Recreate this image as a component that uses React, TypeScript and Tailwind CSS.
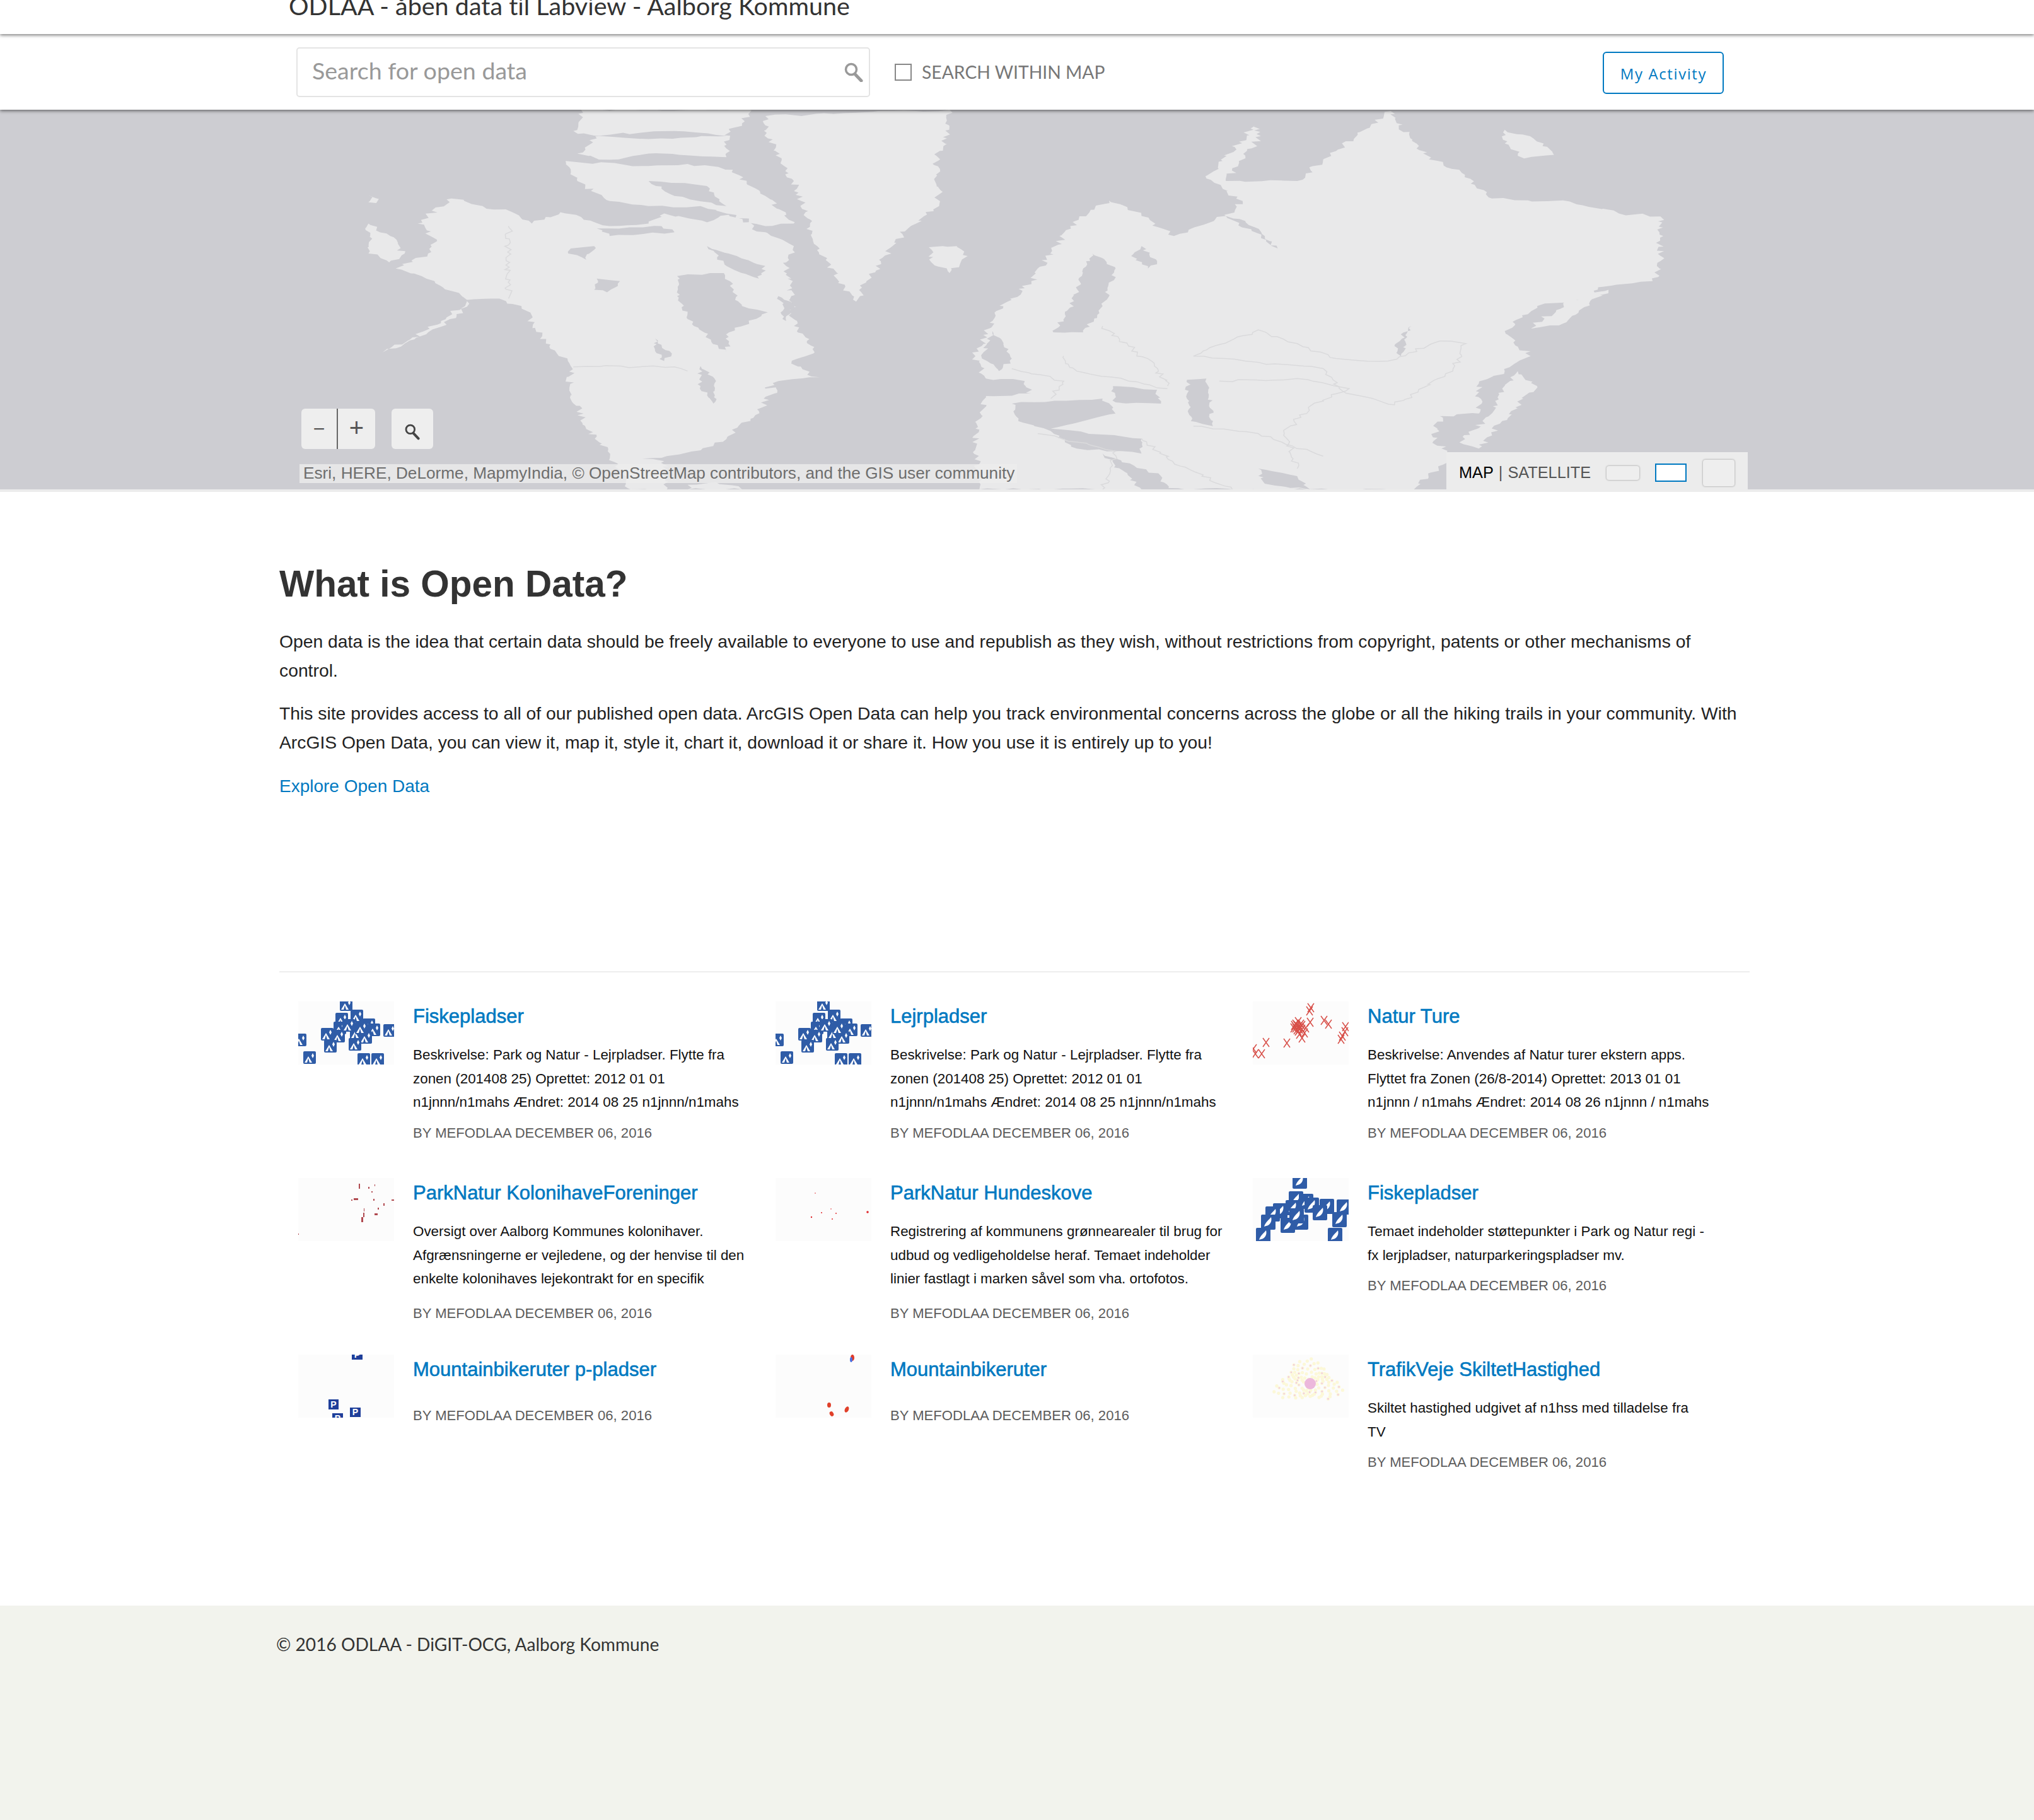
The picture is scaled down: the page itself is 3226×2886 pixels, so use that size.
import { Fragment } from 'react';

type Pt = [number, number];

const LAND = [
  // alaska + canada + us + mexico
  'M348,370 L372,400 L395,425 L410,470 L432,425 L450,455 L470,480 L500,470 L512,430 L545,465 L562,435 L590,505 L612,560 L606,640 L610,760 L612,880 L622,940 L628,985 L610,1030 L632,1085 L600,1100 L590,1130 L598,1125 L585,1220 L560,1332 L533,1382 L510,1407 L495,1410 L512,1420 L514,1533 L486,1533 L483,1492 L464,1350 L452,1292 L439,1125 L440,1040 L418,920 L402,800 L385,770 L360,775 L335,700 L305,650 L330,590 L337,540 L322,470 Z',
  // chukotka wrap
  'M284,470 L298,510 L312,590 L300,625 L284,590 Z',
  'M284,358 L292,372 L290,388 L284,385 Z',
  // aleutians
  'M360,780 L352,840 L330,905 L312,950 L295,985 L318,925 L340,860 Z',
  // arctic islands
  'M448,15 L578,15 L572,70 L562,95 L560,205 L500,190 L470,215 L445,190 L460,130 L442,100 Z',
  'M436,220 L500,240 L530,232 L565,255 L590,360 L612,470 L590,480 L560,430 L540,400 L500,400 L470,380 L445,300 Z',
  // greenland
  'M590,40 L732,15 L730,130 L722,200 L724,400 L700,490 L688,560 L668,700 L660,782 L645,690 L630,560 L612,300 L592,130 Z',
  // iceland
  'M716,565 L738,560 L746,600 L732,668 L718,625 Z',
  // eurasia
  'M855,378 L880,440 L905,520 L945,440 L958,380 L930,290 L968,70 L972,120 L945,300 L1000,300 L1030,180 L1072,20 L1092,170 L1115,245 L1125,255 L1150,370 L1210,382 L1248,430 L1280,442 L1280,620 L1274,700 L1232,725 L1225,775 L1185,800 L1160,900 L1180,1000 L1160,1060 L1140,1110 L1140,1230 L1110,1240 L1105,1340 L1120,1400 L1090,1533 L755,1533 L752,1290 L760,1160 L795,1150 L790,1100 L760,1090 L752,1000 L768,820 L795,700 L825,480 Z',
  // kuril / kamchatka arc
  'M1240,735 L1225,790 L1205,870 L1180,890 L1205,790 Z',
  // japan
  'M1170,1060 L1185,1120 L1165,1220 L1140,1370 L1125,1345 L1150,1230 L1158,1130 Z',
  // svalbard side
  'M1160,95 L1190,150 L1198,195 L1175,210 L1160,150 Z',
  // cuba
  'M530,1515 L552,1505 L572,1533 L530,1533 Z',
];

const WATER = [
  // arctic channels
  'M445,120 L520,100 L560,120 L500,132 Z',
  'M460,490 L510,480 L520,505 L470,520 Z',
  'M500,300 L545,320 L560,400 L520,360 Z',
  // hudson bay + channels
  'M522,680 L558,668 L572,800 L592,825 L562,905 L560,985 L535,880 L522,760 Z',
  'M545,560 L590,640 L585,690 L560,640 Z',
  'M600,760 L612,800 L606,860 Z',
  // gulf of st lawrence + us lakes
  'M540,1040 L552,1100 L550,1190 L540,1120 Z',
  // baltic + white sea
  'M842,590 L860,650 L850,800 L835,905 L812,905 L828,780 L835,650 Z',
  'M880,560 L892,620 L885,650 L872,600 Z',
  'M945,440 L965,500 L985,570 L975,520 L960,460 Z',
  // channel
  'M765,900 L780,1010 L770,1060 L757,1010 Z',
  // mediterranean
  'M780,1190 L850,1170 L860,1230 L810,1290 L880,1330 L880,1390 L830,1370 L810,1300 L785,1260 Z',
  // black sea + caspian
  'M858,1120 L892,1135 L895,1190 L860,1185 Z',
  'M915,1095 L930,1090 L935,1280 L918,1260 Z',
  // red sea + gulf
  'M850,1390 L895,1480 L900,1533 L880,1533 Z',
  'M970,1450 L1000,1480 L1010,1533 L975,1510 Z',
  // great lakes
  'M505,930 L518,990 L512,1020 L505,980 Z',
  'M460,690 L478,700 L468,745 L458,735 Z',
  'M440,570 L458,560 L452,615 L438,590 Z',
  'M1080,1000 L1088,880 L1075,960 Z',
];

const BORDERS = [
  'M392,480 L392,770',
  'M442,1043 L520,1043 L530,1060',
  'M850,880 L870,960 L890,1040 L900,1120',
  'M820,1000 L830,1060 L870,1100 L900,1130',
  'M920,1000 L970,895 L1000,950 L1030,1010 L1070,1020 L1110,940 L1130,950 L1120,1060 L1075,1195 L1035,1140 L1020,1050 L960,1020 L920,1000',
  'M940,1100 L1000,1090 L1040,1130 L1010,1200 L990,1310 L1000,1450',
  'M880,1330 L910,1440 L950,1533',
  'M800,1310 L860,1380 L850,1533',
  'M920,1280 L970,1310 L1020,1400',
  'M780,1050 L820,1100 L810,1170',
];

// break the straight edges up so the outlines read as coastline
function rough(d: string, amp: number, closed: boolean) {
  const pts = d.match(/-?\d+(\.\d+)?,-?\d+(\.\d+)?/g)!.map((p) => p.split(',').map(Number));
  let seed = pts.length * 7 + Math.round(pts[0][0]);
  const rnd = () => {
    seed = (seed * 9301 + 49297) % 233280;
    return seed / 233280 - 0.5;
  };
  const out: string[] = [];
  const n = closed ? pts.length : pts.length - 1;
  for (let i = 0; i < n; i++) {
    const [x1, y1] = pts[i];
    const [x2, y2] = pts[(i + 1) % pts.length];
    const steps = Math.max(1, Math.round(Math.hypot(x2 - x1, y2 - y1) / 9));
    for (let s = 0; s < steps; s++) {
      const t = s / steps;
      const j = s === 0 ? 0 : amp;
      out.push(`${x1 + (x2 - x1) * t + rnd() * j},${y1 + (y2 - y1) * t + rnd() * j * 1.6}`);
    }
  }
  if (!closed) out.push(pts[n].join(','));
  return `M${out.join(' L')}${closed ? ' Z' : ''}`;
}

const MAP_TILE = '#2f5ca7';

const tentTiles: Pt[] = [[76, 5], [93, 23], [69, 28], [112, 37], [120, 45], [66, 42], [46, 52], [92, 50], [107, 57], [64, 55], [51, 71], [90, 68], [145, 46], [3, 61], [18, 89], [104, 92], [126, 92], [80, 38], [100, 42]];
const fishTiles: Pt[] = [[75, 5], [69, 33], [85, 37], [64, 47], [44, 52], [32, 57], [118, 45], [94, 43], [107, 55], [145, 46], [138, 66], [25, 70], [56, 75], [77, 70], [17, 91], [131, 91], [70, 60]];
const crosses: Pt[] = [[90, 15], [92, 10], [113, 30], [120, 36], [91, 33], [72, 32], [66, 38], [72, 40], [78, 44], [70, 45], [76, 36], [82, 50], [74, 52], [84, 42], [65, 42], [68, 36], [74, 44], [70, 38], [75, 41], [72, 47], [78, 38], [68, 42], [146, 48], [147, 40], [140, 60], [142, 55], [54, 66], [21, 65], [14, 83], [4, 83], [1, 75], [78, 58]];

function Tents() {
  return (
    <>
      {tentTiles.map(([x, y], i) => (
        <g key={i} transform={`translate(${x - 10} ${y - 10})`}>
          <rect width="20" height="20" rx="2" fill={MAP_TILE} />
          <path d="M2,18 L8,8 L14,18 Z M8,11 L6,18 L10,18 Z" fill="#fff" fillRule="evenodd" />
          <path d="M15,3 L17,7 L15,11 L13,7 Z" fill="#fff" />
        </g>
      ))}
    </>
  );
}

function Fish() {
  return (
    <>
      {fishTiles.map(([x, y], i) => (
        <g key={i} transform={`translate(${x - 12} ${y - 12})`}>
          <rect width="23" height="24" rx="2" fill={MAP_TILE} />
          <path d="M5,19 C7,12 12,9 16,4 C18,11 14,17 8,18 Z" fill="#fff" />
        </g>
      ))}
    </>
  );
}

function Crosses() {
  return (
    <g stroke="#d2322a" strokeWidth="1.5" opacity="0.85">
      {crosses.map(([x, y], i) => (
        <path key={i} d={`M${x - 5},${y - 7} L${x + 5},${y + 7} M${x + 5},${y - 7} L${x - 5},${y + 7}`} />
      ))}
    </g>
  );
}

function Colonies() {
  const marks: [number, number, number, number][] = [
    [96, 9, 2, 8], [111, 14, 2, 3], [121, 10, 1, 3], [116, 21, 2, 2], [88, 32, 7, 3], [84, 34, 2, 2], [119, 33, 2, 3],
    [148, 34, 5, 2], [135, 40, 2, 4], [104, 48, 1, 5], [126, 47, 2, 3], [121, 56, 5, 3], [103, 55, 2, 7], [100, 62, 3, 8], [0, 88, 1, 2],
  ];
  return (
    <g fill="#b04a50">
      {marks.map(([x, y, w, h], i) => (
        <rect key={i} x={x} y={y} width={w} height={h} />
      ))}
    </g>
  );
}

function Dogs() {
  const dots: [number, number, number][] = [[63, 24, 0.8], [88, 49, 0.8], [73, 55, 1], [96, 56, 1], [57, 62, 1.2], [90, 65, 1], [146, 54, 1.8]];
  return (
    <g fill="#e0282c">
      {dots.map(([x, y, r], i) => (
        <circle key={i} cx={x} cy={y} r={r} />
      ))}
    </g>
  );
}

function Parking() {
  const tiles: [number, number, number, number][] = [[48, 71, 16, 16], [82, 84, 17, 15], [54, 93, 17, 16], [85, -8, 17, 16]];
  return (
    <g>
      {tiles.map(([x, y, w, h], i) => (
        <g key={i}>
          <rect x={x} y={y} width={w} height={h} fill="#1f3f9a" />
          <text x={x + w / 2} y={y + h - 3} textAnchor="middle" fontSize="14" fontWeight="700" fill="#fff" fontFamily="'Liberation Sans', sans-serif">P</text>
        </g>
      ))}
    </g>
  );
}

function BikeRoutes() {
  return (
    <g>
      <ellipse cx="122" cy="5" rx="3" ry="5" fill="#e03a2a" />
      <ellipse cx="120" cy="8" rx="2" ry="4" fill="#4a6fe0" />
      <ellipse cx="85" cy="80" rx="3" ry="4" fill="#e0402a" />
      <ellipse cx="89" cy="94" rx="3" ry="4" fill="#e0402a" transform="rotate(-30 89 94)" />
      <ellipse cx="113" cy="87" rx="3" ry="5" fill="#e0402a" transform="rotate(25 113 87)" />
    </g>
  );
}

function SignedRoads() {
  const dots: Pt[] = [];
  for (let i = 1; i < 120; i++) {
    const a = i * 2.399;
    const r = Math.sqrt(i / 120);
    const wob = 1 + 0.25 * Math.sin(a * 3);
    dots.push([88 + Math.cos(a) * r * 48 * wob, 44 + Math.sin(a) * r * 31 * wob]);
  }
  return (
    <g>
      <g fill="#fcf8d8">
        {dots.map(([x, y], i) => (
          <circle key={i} cx={x} cy={y} r="2.6" />
        ))}
      </g>
      <g fill="#f0c4e0">
        {dots.filter((_, i) => i % 4 === 0).map(([x, y], i) => (
          <circle key={i} cx={x} cy={y} r="1.2" />
        ))}
      </g>
      <ellipse cx="91" cy="46" rx="9" ry="9" fill="#ecb8dc" />
    </g>
  );
}

function SearchGlass({ className }: { className: string }) {
  return (
    <svg className={className} viewBox="0 0 30 31" fill="none" stroke="currentColor">
      <circle cx="11" cy="11" r="8.5" strokeWidth="3.5" />
      <path d="M17,18.5 L27,29" strokeWidth="5" strokeLinecap="round" />
    </svg>
  );
}

const posts = [
  { title: 'Fiskepladser', desc: 'Beskrivelse: Park og Natur - Lejrpladser. Flytte fra zonen (201408 25) Oprettet: 2012 01 01 n1jnnn/n1mahs Ændret: 2014 08 25 n1jnnn/n1mahs', thumb: <Tents /> },
  { title: 'Lejrpladser', desc: 'Beskrivelse: Park og Natur - Lejrpladser. Flytte fra zonen (201408 25) Oprettet: 2012 01 01 n1jnnn/n1mahs Ændret: 2014 08 25 n1jnnn/n1mahs', thumb: <Tents /> },
  { title: 'Natur Ture', desc: 'Beskrivelse: Anvendes af Natur turer ekstern apps. Flyttet fra Zonen (26/8-2014) Oprettet: 2013 01 01 n1jnnn / n1mahs Ændret: 2014 08 26 n1jnnn / n1mahs', thumb: <Crosses /> },
  { title: 'ParkNatur KolonihaveForeninger', desc: 'Oversigt over Aalborg Kommunes kolonihaver. Afgrænsningerne er vejledene, og der henvise til den enkelte kolonihaves lejekontrakt for en specifik', cut: true, thumb: <Colonies /> },
  { title: 'ParkNatur Hundeskove', desc: 'Registrering af kommunens grønnearealer til brug for udbud og vedligeholdelse heraf. Temaet indeholder linier fastlagt i marken såvel som vha. ortofotos.', cut: true, thumb: <Dogs /> },
  { title: 'Fiskepladser', desc: 'Temaet indeholder støttepunkter i Park og Natur regi - fx lerjpladser, naturparkeringspladser mv.', thumb: <Fish /> },
  { title: 'Mountainbikeruter p-pladser', desc: '', thumb: <Parking /> },
  { title: 'Mountainbikeruter', desc: '', thumb: <BikeRoutes /> },
  { title: 'TrafikVeje SkiltetHastighed', desc: 'Skiltet hastighed udgivet af n1hss med tilladelse fra TV', narrow: true, thumb: <SignedRoads /> },
];

function WorldMap() {
  return (
    <svg className="absolute inset-0 h-full w-full" viewBox="0 15 1568 1518" preserveAspectRatio="none">
      {LAND.map((d, i) => (
        <path key={i} d={rough(d, 7, true)} fill="#e9e9ea" />
      ))}
      {WATER.map((d, i) => (
        <path key={i} d={rough(d, 5, true)} fill="#cdcdd2" />
      ))}
      {BORDERS.map((d, i) => (
        <path key={i} d={rough(d, 6, false)} fill="none" stroke="#dadadc" strokeWidth="1.5" vectorEffect="non-scaling-stroke" />
      ))}
    </svg>
  );
}

export default function App() {
  return (
    <div className="flex min-h-[2886px] w-[3226px] flex-col bg-white font-['Liberation_Sans',Arial,sans-serif]">
      {/* Site title, cut off by the top of the page */}
      <header className="relative z-20 h-[54px] overflow-hidden bg-white shadow-[0_2px_5px_rgba(0,0,0,0.5)]">
        <h1 className="-mt-[17px] ml-[458px] font-['Lato',sans-serif] text-[39.5px] leading-[52px] text-[#333] [font-variant-ligatures:none]">
          ODLAA - åben data til Labview - Aalborg Kommune
        </h1>
      </header>

      {/* Search bar */}
      <div className="relative z-10 flex h-[120px] items-center bg-white pl-[470px] shadow-[0_2px_5px_rgba(0,0,0,0.5)]">
        <div className="flex h-[79px] w-[910px] items-center justify-between rounded-[5px] border-2 border-[#e4e4e4] pl-[23px] pr-[9px]">
          <span className="-mt-[3px] font-['Lato',sans-serif] text-[37.6px] text-[#999]">Search for open data</span>
          <SearchGlass className="h-[31px] w-[30px] text-[#999]" />
        </div>
        <span className="ml-[39px] h-[27px] w-[27px] border-2 border-[#888]" />
        <span className="ml-[16px] font-['Lato',sans-serif] text-[28.3px] text-[#777]">SEARCH WITHIN MAP</span>
        <button className="ml-[790px] mt-[3px] h-[67px] w-[192px] rounded-[6px] border-2 border-[#0079c1] pt-[2px] font-['Open_Sans',sans-serif] text-[24px] tracking-[1.6px] text-[#0079c1]">
          My Activity
        </button>
      </div>

      {/* Map */}
      <section className="relative h-[602px] overflow-hidden bg-[#cdcdd2]">
        <WorldMap />
        <div className="absolute left-[478px] top-[474px] flex h-[64px] w-[117px] rounded-[6px] bg-[#eeeeee] text-[#555]">
          <span className="flex w-[58px] items-center justify-center border-r-2 border-[#666] text-[32px] leading-none">−</span>
          <span className="flex flex-1 items-center justify-center pb-[4px] text-[40px] leading-none">+</span>
        </div>
        <div className="absolute left-[621px] top-[474px] flex h-[64px] w-[66px] items-center justify-center rounded-[6px] bg-[#eeeeee]">
          <SearchGlass className="mt-[8px] h-[27px] w-[24px] text-[#444]" />
        </div>
        <div className="absolute left-[475px] top-[562px] flex h-[30px] w-[1138px] items-center whitespace-nowrap bg-[#ececec]/80 pl-[6px] text-[26.2px] text-[#6e6e6e]">
          Esri, HERE, DeLorme, MapmyIndia, © OpenStreetMap contributors, and the GIS user community
        </div>
        <div className="absolute bottom-0 left-[2294px] flex h-[59px] w-[478px] items-center bg-[#ececec] pl-[20px] pt-[6px] text-[25.3px] text-[#555]">
          <span className="text-black">MAP</span>
          <span className="mx-[8px]">|</span>
          <span>SATELLITE</span>
          <span className="ml-[25px] h-[22px] w-[52px] rounded-[4px] bg-[#eeeeee] shadow-[0_0_3px_rgba(0,0,0,0.4)]" />
          <span className="ml-[25px] h-[29px] w-[50px] border-2 border-[#0079c1] bg-white" />
          <span className="ml-[26px] h-[42px] w-[50px] rounded-[4px] bg-[#eeeeee] shadow-[0_0_3px_rgba(0,0,0,0.4)]" />
        </div>
      </section>
      <div className="h-[4px] bg-[#ececec]" />

      {/* Intro */}
      <section className="ml-[443px] w-[2332px] pt-[110px]">
        <h2 className="text-[58.5px] font-bold leading-[72px] text-[#333]">What is Open Data?</h2>
        <p className="mt-[32px] w-[2320px] text-[28.3px] leading-[46px] text-[#222]">
          Open data is the idea that certain data should be freely available to everyone to use and republish as they wish, without restrictions from copyright, patents or other mechanisms of control.
        </p>
        <p className="mt-[22px] w-[2320px] text-[28.3px] leading-[46px] text-[#222]">
          This site provides access to all of our published open data. ArcGIS Open Data can help you track environmental concerns across the globe or all the hiking trails in your community. With ArcGIS Open Data, you can view it, map it, style it, chart it, download it or share it. How you use it is entirely up to you!
        </p>
        <a className="mt-[24px] block text-[28px] leading-[46px] text-[#0079c1]">Explore Open Data</a>

        {/* Recent datasets */}
        <div className="mt-[270px] grid grid-cols-[757px_757px_757px] auto-rows-[280px] border-t-2 border-[#eeeeee] pt-[46px]">
          {posts.map((p, i) => (
            <Fragment key={i}>
              <article className="flex pl-[30px]">
                <svg className="h-[100px] w-[152px] shrink-0 bg-[#fcfcfc]" viewBox="0 0 152 100">
                  {p.thumb}
                </svg>
                <div className={`ml-[30px] ${p.narrow ? 'w-[530px]' : 'w-[545px]'}`}>
                  <h3 className="mb-[20px] mt-[2px] text-[31px] font-normal leading-[44px] text-[#0079c1] [-webkit-text-stroke:0.6px_#0079c1]">{p.title}</h3>
                  {p.desc && <p className="text-[22.4px] leading-[37.5px] text-[#111]">{p.desc}</p>}
                  <div className={`${p.desc ? (p.cut ? 'mt-[21px]' : 'mt-[15px]') : 'mt-[36px]'} text-[22.1px] leading-[30px] text-[#5c5c5c]`}>
                    BY MEFODLAA DECEMBER 06, 2016
                  </div>
                </div>
              </article>
            </Fragment>
          ))}
        </div>
      </section>

      {/* Footer */}
      <footer className="mt-[118px] flex-1 bg-[#f2f3ed] pl-[438px] pt-[40px] font-['Lato',sans-serif] text-[28.1px] text-[#333]">
        © 2016 ODLAA - DiGIT-OCG, Aalborg Kommune
      </footer>
    </div>
  );
}
